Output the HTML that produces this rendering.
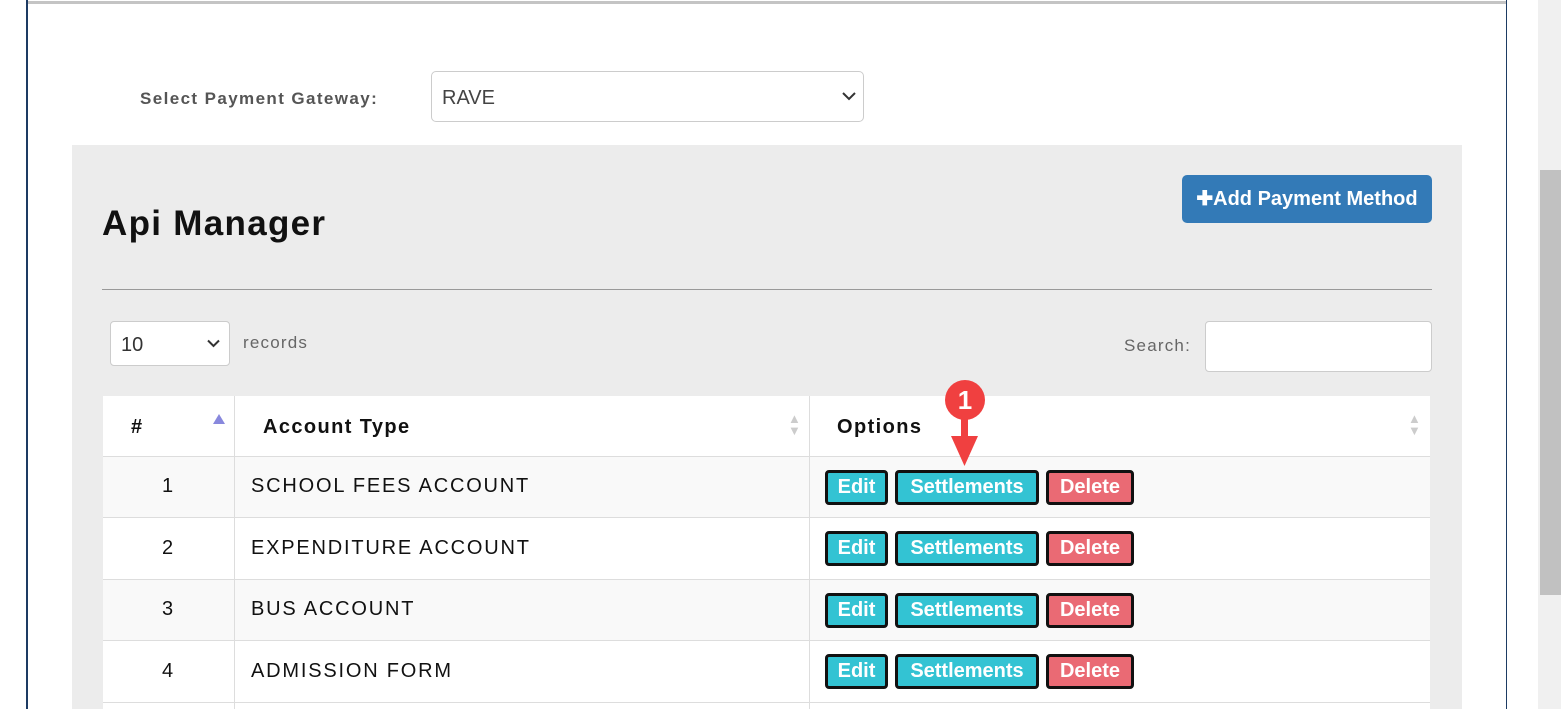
<!DOCTYPE html>
<html><head><style>
*{box-sizing:border-box;margin:0;padding:0}
body{width:1561px;height:709px;overflow:hidden;background:#fff;font-family:"Liberation Sans",Arial,sans-serif;position:relative}
.abs{position:absolute}
.btn{position:absolute;height:35px;border:3px solid #111;border-radius:4px;color:#fff;font-weight:bold;font-size:20px;line-height:29px;text-align:center}
.e{background:#33c3d3}.d{background:#ea6a74}
.cell{position:absolute;font-size:20px;color:#111;letter-spacing:1.8px}
</style></head><body>
<div class="abs" style="left:26px;top:0;width:2px;height:709px;background:#1d3b63"></div>
<div class="abs" style="left:1506px;top:0;width:1px;height:709px;background:#1d3b63"></div>
<div class="abs" style="left:28px;top:1px;width:1478px;height:3px;background:#c4c4c4"></div>
<div class="abs" style="left:1538px;top:0;width:23px;height:709px;background:#f0f0f0"></div>
<div class="abs" style="left:1540px;top:170px;width:21px;height:425px;background:#c1c1c1"></div>

<div class="abs" style="left:140px;top:89px;font-size:17px;font-weight:bold;color:#555;letter-spacing:1.4px">Select Payment Gateway:</div>
<div class="abs" style="left:431px;top:71px;width:433px;height:51px;border:1px solid #ccc;border-radius:5px;font-size:20px;color:#444;padding:15px 10px">RAVE
<svg class="abs" style="left:410px;top:19px" width="14" height="10" viewBox="0 0 14 10"><path d="M1 2l6 6 6-6" stroke="#333" stroke-width="2" fill="none"/></svg></div>

<div class="abs" style="left:72px;top:145px;width:1390px;height:564px;background:#ececec"></div>
<div class="abs" style="left:102px;top:204px;font-size:35px;font-weight:bold;color:#111;letter-spacing:1.3px">Api Manager</div>
<div class="abs" style="left:1182px;top:175px;width:250px;height:48px;background:#337ab7;border-radius:5px;color:#fff;font-weight:bold;font-size:20px;line-height:48px;text-align:center">✚Add Payment Method</div>
<div class="abs" style="left:102px;top:289px;width:1330px;height:1px;background:#999"></div>

<div class="abs" style="left:110px;top:321px;width:120px;height:45px;background:#fff;border:1px solid #ccc;border-radius:4px;font-size:20px;color:#333;padding:12px 10px">10
<svg class="abs" style="left:96px;top:17px" width="13" height="9" viewBox="0 0 13 9"><path d="M1 1.5l5.5 5.5 5.5-5.5" stroke="#333" stroke-width="2" fill="none"/></svg></div>
<div class="abs" style="left:243px;top:333px;font-size:17px;color:#666;letter-spacing:1.2px">records</div>
<div class="abs" style="left:1124px;top:336px;font-size:17px;color:#666;letter-spacing:1.2px">Search:</div>
<div class="abs" style="left:1205px;top:321px;width:227px;height:51px;background:#fff;border:1px solid #ccc;border-radius:4px"></div>

<div class="abs" style="left:103px;top:396px;width:1327px;height:313px;background:#fff"></div>
<div class="abs" style="left:103px;top:457px;width:1327px;height:61px;background:#f9f9f9"></div>
<div class="abs" style="left:103px;top:579px;width:1327px;height:61px;background:#f9f9f9"></div>
<div class="abs" style="left:103px;top:456px;width:1327px;height:1px;background:#ddd"></div>
<div class="abs" style="left:103px;top:517px;width:1327px;height:1px;background:#ddd"></div>
<div class="abs" style="left:103px;top:579px;width:1327px;height:1px;background:#ddd"></div>
<div class="abs" style="left:103px;top:640px;width:1327px;height:1px;background:#ddd"></div>
<div class="abs" style="left:103px;top:702px;width:1327px;height:1px;background:#ddd"></div>
<div class="abs" style="left:234px;top:396px;width:1px;height:313px;background:#ddd"></div>
<div class="abs" style="left:809px;top:396px;width:1px;height:313px;background:#ddd"></div>

<div class="cell" style="left:131px;top:416px;font-weight:bold">#</div>
<div class="abs" style="left:213px;top:414px;width:0;height:0;border-left:6px solid transparent;border-right:6px solid transparent;border-bottom:10px solid #8888dd"></div>
<div class="cell" style="left:263px;top:416px;font-weight:bold;letter-spacing:1.4px">Account Type</div>
<div class="cell" style="left:837px;top:416px;font-weight:bold;letter-spacing:1.4px">Options</div>
<div class="abs" style="left:788px;top:413px;color:#ccc;font-size:13px;line-height:12px">▲<br>▼</div>
<div class="abs" style="left:1408px;top:413px;color:#ccc;font-size:13px;line-height:12px">▲<br>▼</div>

<div class="cell" style="left:162px;top:475px">1</div><div class="cell" style="left:251px;top:475px">SCHOOL FEES ACCOUNT</div>
<div class="cell" style="left:162px;top:537px">2</div><div class="cell" style="left:251px;top:537px">EXPENDITURE ACCOUNT</div>
<div class="cell" style="left:162px;top:598px">3</div><div class="cell" style="left:251px;top:598px">BUS ACCOUNT</div>
<div class="cell" style="left:162px;top:660px">4</div><div class="cell" style="left:251px;top:660px">ADMISSION FORM</div>

<div class="btn e" style="left:825px;top:470px;width:63px">Edit</div><div class="btn e" style="left:895px;top:470px;width:144px">Settlements</div><div class="btn d" style="left:1046px;top:470px;width:88px">Delete</div>
<div class="btn e" style="left:825px;top:531px;width:63px">Edit</div><div class="btn e" style="left:895px;top:531px;width:144px">Settlements</div><div class="btn d" style="left:1046px;top:531px;width:88px">Delete</div>
<div class="btn e" style="left:825px;top:593px;width:63px">Edit</div><div class="btn e" style="left:895px;top:593px;width:144px">Settlements</div><div class="btn d" style="left:1046px;top:593px;width:88px">Delete</div>
<div class="btn e" style="left:825px;top:654px;width:63px">Edit</div><div class="btn e" style="left:895px;top:654px;width:144px">Settlements</div><div class="btn d" style="left:1046px;top:654px;width:88px">Delete</div>

<svg class="abs" style="left:940px;top:378px" width="50" height="92" viewBox="0 0 50 92">
<rect x="21" y="38" width="7" height="22" fill="#f04040"/>
<path d="M11 58h27l-13.5 30z" fill="#f04040"/>
<circle cx="25" cy="22" r="20" fill="#f04040"/>
<text x="25" y="31" font-family="Liberation Sans" font-size="26" font-weight="bold" fill="#fff" text-anchor="middle">1</text>
</svg>
</body></html>
